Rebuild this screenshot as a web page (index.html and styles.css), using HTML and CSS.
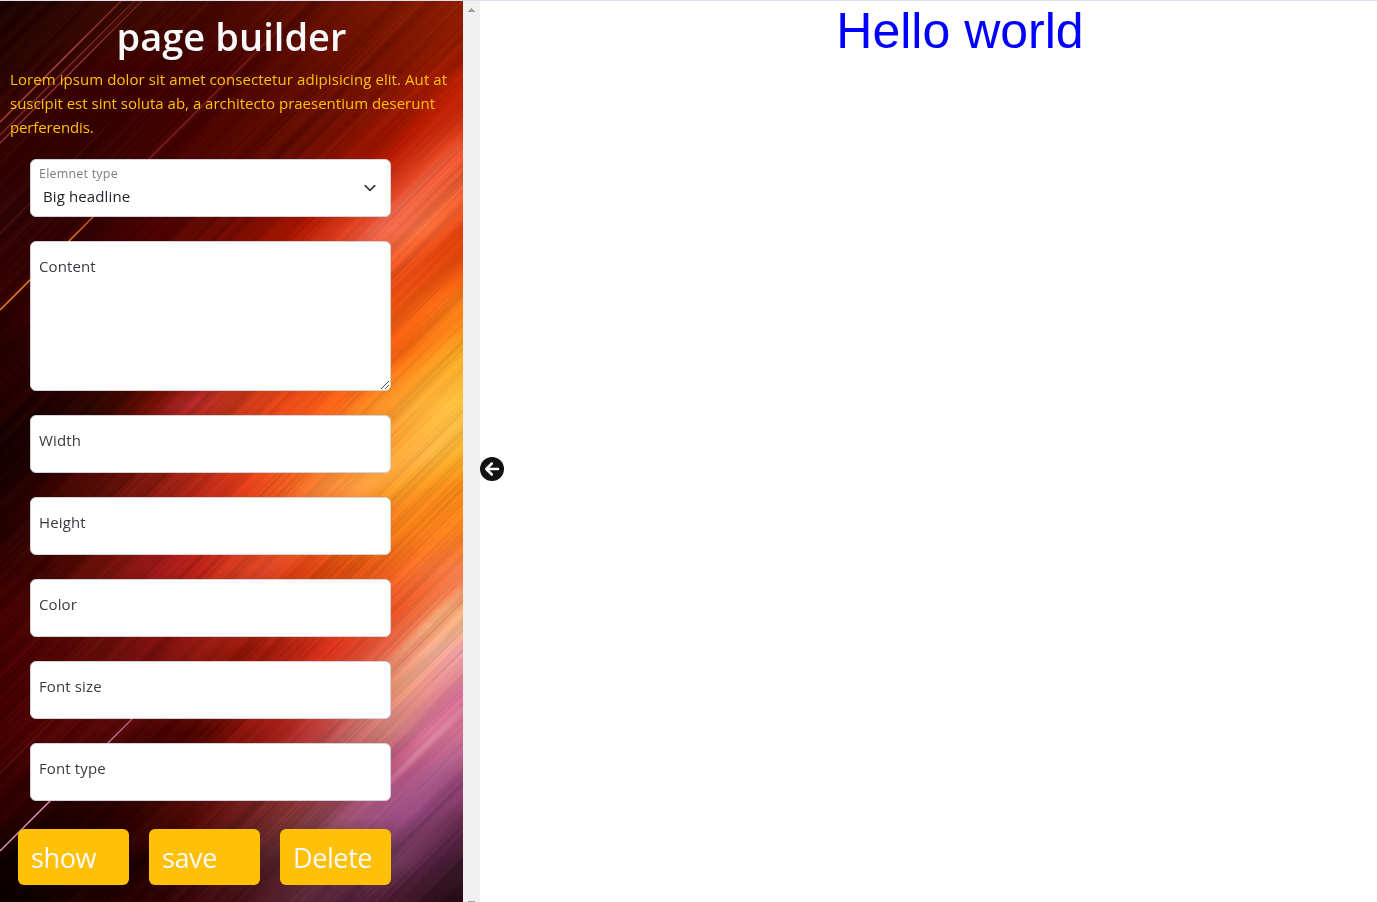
FILE: index.html
```html
<!DOCTYPE html>
<html lang="en">
<head>
<meta charset="utf-8">
<title>page builder</title>
<link rel="stylesheet" href="styles.css">
</head>
<body>
<div class="app">
  <aside class="panel">
    <canvas class="backdrop" width="463" height="901"></canvas>
    <div class="panel-body">
      <h1 class="title">page builder</h1>
      <p class="intro"><span class="l1">Lorem ipsum dolor sit amet consectetur adipisicing elit. Aut at</span><br><span class="l2">suscipit est sint soluta ab, a architecto praesentium deserunt</span><br><span class="l3">perferendis.</span></p>
      <form class="fields">
        <div class="field select">
          <div><div class="caption">Elemnet type</div><div class="value">Big headline</div></div>
          <svg class="chevron" viewBox="0 0 16 16"><path d="m2 5 6 6 6-6"/></svg>
        </div>
        <div class="field area"><span>Content</span>
          <svg class="grip" viewBox="0 0 10 10"><path d="M1 9 9 1M5 9l4-4"/></svg>
        </div>
        <div class="field"><span>Width</span></div>
        <div class="field"><span>Height</span></div>
        <div class="field"><span>Color</span></div>
        <div class="field"><span>Font size</span></div>
        <div class="field"><span>Font type</span></div>
      </form>
      <div class="buttons">
        <div class="btn show">show</div>
        <div class="btn save">save</div>
        <div class="btn delete">Delete</div>
      </div>
    </div>
  </aside>
  <div class="scrollbar">
    <svg class="up" viewBox="0 0 7 4" shape-rendering="crispEdges"><path d="M3 0h1v1h1v1h1v1h1v1H0V3h1V2h1V1h1z"/></svg>
    <i class="down"></i>
  </div>
  <main class="preview">
    <svg class="back" viewBox="0 0 24 24"><circle cx="12" cy="12" r="12"/><path d="M18 12H6.5M11.8 6.5 6.3 12l5.5 5.5"/></svg>
    <div class="headline">Hello world</div>
  </main>
</div>
<script src="backdrop.js"></script>
</body>
</html>
```
FILE: styles.css
```css
* { box-sizing: border-box; }
body { margin: 0; overflow: hidden; background: #fff; font-family: "Open Sans", "Noto Sans", sans-serif; }
.app { display: flex; height: 902px; border-top: 1px solid #dfe2ec; }
.panel { position: relative; width: 463px; flex: none; overflow: hidden; background: #300; }
.backdrop { position: absolute; left: 0; top: 0; }
.panel-body { position: relative; }
.title { margin: 0; padding-top: 11px; height: 66px; text-align: center; color: #f8f9fa; font-size: 38px; line-height: 48px; font-weight: 600; letter-spacing: 0.05px; }
.intro { margin: 0; padding-left: 10px; height: 92px; color: #ffc107; font-size: 15px; line-height: 24px; font-weight: 500; white-space: nowrap; }
.l1 { letter-spacing: 0.08px; }
.l3 { letter-spacing: -0.12px; }
.fields { display: flex; flex-direction: column; gap: 24px; width: 361px; margin-left: 30px; }
.field { height: 58px; padding: 12px 8px; background: #fff; border: 1px solid #ced4da; border-radius: 6px; color: #383c40; font-size: 15px; line-height: 24px; letter-spacing: 0.12px; }
.area { height: 150px; display: flex; justify-content: space-between; padding-right: 0; padding-bottom: 0; }
.grip { align-self: flex-end; width: 10px; height: 10px; fill: none; stroke: #555; stroke-width: 1; }
.select { display: flex; justify-content: space-between; padding: 2px 11px 0 8px; color: #212529; }
.caption { height: 22px; font-size: 12.5px; line-height: 23px; color: #7b7f83; letter-spacing: 0.2px; }
.value { padding-left: 4px; line-height: 25px; }
.chevron { width: 16px; height: 16px; margin-top: 18px; margin-right: 1px; fill: none; stroke: #343a40; stroke-width: 2; stroke-linecap: round; stroke-linejoin: round; transform: scale(.8); }
.buttons { display: flex; gap: 20px; margin: 28px 0 0 18px; }
.btn { width: 111px; height: 56px; padding-left: 13px; border-radius: 6px; background: #ffc107; color: #f8f9fa; font-size: 27px; line-height: 58px; letter-spacing: -0.4px; }
.scrollbar { width: 17px; flex: none; display: flex; flex-direction: column; justify-content: space-between; align-items: center; padding-top: 7px; background: #f0f0f0; }
.up { width: 7px; height: 4px; fill: #a0a0a0; }
.down { width: 7px; height: 1px; background: #a0a0a0; }
.preview { display: flex; flex: 1; }
.back { width: 24px; height: 24px; margin-top: 456px; flex: none; fill: #111; }
.back path { fill: none; stroke: #fff; stroke-width: 2.5; stroke-linecap: round; stroke-linejoin: round; }
.headline { flex: 1; padding-left: 39px; text-align: center; color: #00f; font: 50px/60px "Liberation Sans", Arial, sans-serif; }
```
FILE: backdrop.js
```js
// Colour stops (x, hex) per row; rows are joined along the 45 degree streaks.
const rows = [
  [5, "0 1c0400 60 2a0500 150 3f0a00 250 4a0800 350 6a1200 463 8c1c00"],
  [75, "0 250400 100 3d0000 200 3e0000 300 5a0a00 400 7d1400 463 b82000"],
  [145, "0 350400 100 320000 200 4b0400 300 620c00 400 b01800 463 e85028"],
  [228, "0 300508 50 2e0000 100 350000 150 450000 200 600800 250 780c00 300 b01800 350 d84020 380 e86048 420 f07040 463 e04008"],
  [300, "0 300000 100 400000 200 800c00 300 d83010 400 e85010 430 e86010 463 f88018"],
  [350, "0 200000 100 300000 200 700c00 300 d83c10 400 f06010 430 f88818 463 fcb028"],
  [403, "0 200000 60 200000 100 300800 150 680c00 190 b02828 230 b83018 280 e84818 330 f86018 370 fa8820 420 fcb038 463 fcc040"],
  [450, "0 150000 50 200000 150 701008 250 e04018 330 f87828 400 fba838 430 fdb848 463 fbb028"],
  [485, "0 180000 50 380400 100 500c04 150 801810 200 b82818 240 d83818 290 f06020 320 f88838 360 fa9c40 400 fca028 463 fa8a18"],
  [530, "0 200000 100 580c04 200 b82018 300 e85820 400 f88018 463 fa8020"],
  [567, "0 300000 50 400400 100 681008 150 981818 200 b82018 240 d84020 270 e04828 300 d84010 350 e05010 400 f06820 463 f88050"],
  [610, "0 400000 100 601008 200 a01810 300 d03818 400 f05828 430 f08050 463 f0b080"],
  [649, "0 400000 50 500404 100 600c08 150 781010 200 901810 250 981808 290 b02010 330 d83018 360 e04830 400 e87858 430 f0b090 463 e898a0"],
  [690, "0 400000 100 600808 200 780c04 300 c03020 400 e89878 430 e89090 463 d87098"],
  [730, "0 400000 50 500404 100 580808 150 480404 200 500400 240 801008 280 a82018 320 c04040 350 c86868 390 d08078 420 d07090 463 d07090"],
  [775, "0 380000 100 300000 200 580c08 300 983838 400 b05080 430 b06090 463 984878"],
  [815, "0 300000 50 200000 100 280000 150 380400 200 580c08 250 702020 300 803838 350 985070 400 a05088 430 884070 463 602848"],
  [860, "0 100000 140 200000 270 502028 400 703858 430 502040 463 381828"],
  [901, "0 0c0000 60 180000 120 250000 180 380408 240 481018 300 582838 350 502038 400 401828 463 200810"]
].map(([y, text]) => {
  const parts = text.split(" "), stops = [];
  for (let i = 0; i < parts.length; i += 2) {
    const n = parseInt(parts[i + 1], 16);
    stops.push([+parts[i], n >> 16, (n >> 8) & 255, n & 255]);
  }
  return { y, stops };
});
function sample(stops, x) {
  if (x <= 0) return stops[0].slice(1);
  for (let i = 1; i < stops.length; i++) {
    const a = stops[i - 1], b = stops[i];
    if (x <= b[0]) {
      const k = (x - a[0]) / (b[0] - a[0]);
      return [1, 2, 3].map(c => a[c] + (b[c] - a[c]) * k);
    }
  }
  return stops[stops.length - 1].slice(1);
}
let seed = 7;
function random() { seed = (seed * 16807) % 2147483647; return seed / 2147483647; }
const table = Array.from({ length: 4096 }, random);
function noise(v) {
  const i = Math.floor(v), f = v - i;
  return table[(i + 2048) & 4095] * (1 - f) + table[(i + 2049) & 4095] * f - 0.5;
}
const canvas = document.querySelector(".backdrop");
const ctx = canvas.getContext("2d");
const w = canvas.width, h = canvas.height, image = ctx.createImageData(w, h);
for (let y = 0; y < h; y++) {
  let r = 0;
  while (r < rows.length - 2 && y > rows[r + 1].y) r++;
  const a = rows[r], b = rows[r + 1];
  const k = Math.min(1, Math.max(0, (y - a.y) / (b.y - a.y)));
  for (let x = 0; x < w; x++) {
    const p = sample(a.stops, x + (y - a.y)), q = sample(b.stops, x - (b.y - y));
    const s = x + y, band = Math.floor((x - y + 1000) / 160), f = (x - y + 1000) / 160 - band;
    const fine = noise(s / 2 + band * 577) * (1 - f) + noise(s / 2 + (band + 1) * 577) * f;
    const wide = noise(s / 9 + 300);
    const gain = 1 + fine * 0.07 + wide * 0.07;
    const o = (y * w + x) * 4;
    for (let c = 0; c < 3; c++) image.data[o + c] = (p[c] * (1 - k) + q[c] * k) * gain + (fine + wide) * (c ? 5 : 10);
    image.data[o + 3] = 255;
  }
}
ctx.putImageData(image, 0, 0);
// Thin bright streaks: x1, y1, x2, y2, rgb, peak opacity, width
[
  [0, 121, 121, 0, "215,95,85", 0.8, 1.2],
  [0, 134, 134, 0, "190,80,80", 0.55, 1.1],
  [0, 142, 142, 0, "215,85,100", 0.65, 1.2],
  [0, 309, 110, 199, "245,130,35", 1, 1.5],
  [0, 232, 110, 122, "130,50,40", 0.5, 1],
  [145, 162, 280, 27, "120,40,35", 0.7, 2],
  [0, 772, 75, 697, "140,50,60", 0.5, 1],
  [0, 850, 145, 705, "215,145,185", 1, 1.5],
  [300, 304, 463, 141, "250,140,110", 0.35, 6],
  [330, 288, 463, 155, "245,150,100", 0.4, 3],
  [370, 682, 463, 589, "255,215,165", 0.5, 7],
  [360, 810, 463, 707, "245,175,190", 0.45, 6],
  [320, 850, 463, 707, "225,150,180", 0.3, 3]
].forEach(([x1, y1, x2, y2, rgb, alpha, width]) => {
  const g = ctx.createLinearGradient(x1, y1, x2, y2);
  g.addColorStop(0, `rgba(${rgb},${width > 2 ? 0 : alpha})`);
  g.addColorStop(0.6, `rgba(${rgb},${alpha})`);
  g.addColorStop(1, `rgba(${rgb},${alpha * 0.5})`);
  ctx.strokeStyle = g;
  ctx.lineWidth = width;
  ctx.filter = width > 2 ? "blur(2px)" : "none";
  ctx.beginPath();
  ctx.moveTo(x1, y1);
  ctx.lineTo(x2, y2);
  ctx.stroke();
});
```
